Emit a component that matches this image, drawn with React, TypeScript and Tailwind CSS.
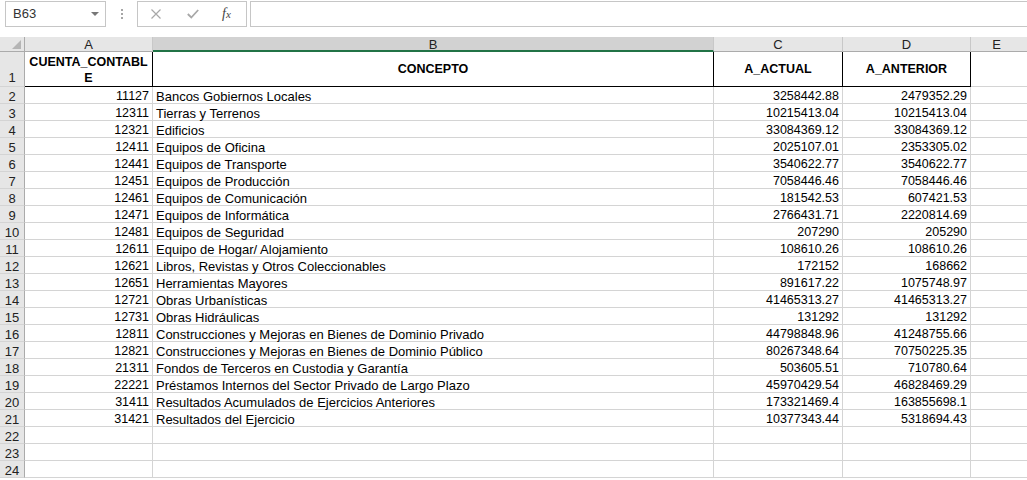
import React from "react";

const rows: [string, string, string, string][] = [
  ["11127", "Bancos Gobiernos Locales", "3258442.88", "2479352.29"],
  ["12311", "Tierras y Terrenos", "10215413.04", "10215413.04"],
  ["12321", "Edificios", "33084369.12", "33084369.12"],
  ["12411", "Equipos de Oficina", "2025107.01", "2353305.02"],
  ["12441", "Equipos de Transporte", "3540622.77", "3540622.77"],
  ["12451", "Equipos de Producción", "7058446.46", "7058446.46"],
  ["12461", "Equipos de Comunicación", "181542.53", "607421.53"],
  ["12471", "Equipos de Informática", "2766431.71", "2220814.69"],
  ["12481", "Equipos de Seguridad", "207290", "205290"],
  ["12611", "Equipo de Hogar/ Alojamiento", "108610.26", "108610.26"],
  ["12621", "Libros, Revistas y Otros Coleccionables", "172152", "168662"],
  ["12651", "Herramientas Mayores", "891617.22", "1075748.97"],
  ["12721", "Obras Urbanísticas", "41465313.27", "41465313.27"],
  ["12731", "Obras Hidráulicas", "131292", "131292"],
  ["12811", "Construcciones y Mejoras en Bienes de Dominio Privado", "44798848.96", "41248755.66"],
  ["12821", "Construcciones y Mejoras en Bienes de Dominio Público", "80267348.64", "70750225.35"],
  ["21311", "Fondos de Terceros en Custodia y Garantía", "503605.51", "710780.64"],
  ["22221", "Préstamos Internos del Sector Privado de Largo Plazo", "45970429.54", "46828469.29"],
  ["31411", "Resultados Acumulados de Ejercicios Anteriores", "173321469.4", "163855698.1"],
  ["31421", "Resultados del Ejercicio", "10377343.44", "5318694.43"],
  ["", "", "", ""],
  ["", "", "", ""],
  ["", "", "", ""],
];

const cell = "h-[17px] border-r border-b border-[#d4d4d4] leading-[19px] whitespace-nowrap";
const rowHead =
  "h-[17px] border-r border-b border-r-[#ababab] border-b-[#d4d4d4] bg-[#e6e6e6] text-center leading-[19px] text-[#222]";

export default function App() {
  return (
    <div className="w-[1027px] h-[480px] overflow-hidden bg-white font-['Liberation_Sans',Arial,sans-serif] text-[13px] text-black">
      {/* toolbar */}
      <div className="flex h-[27px] items-start pt-[1px]">
        <div className="ml-[5px] flex h-[26px] w-[101px] items-center justify-between border border-[#c6c6c6] pl-[7px] pr-[6px] text-[13px] text-[#333]">
          <span>B63</span>
          <svg width="8" height="4" viewBox="0 0 8 4">
            <polygon points="0,0 8,0 4,4" fill="#777" />
          </svg>
        </div>
        <div className="ml-[15px] flex h-[26px] flex-col items-center justify-center gap-[2px]">
          <div className="h-[2px] w-[2px] bg-[#a6a6a6]" />
          <div className="h-[2px] w-[2px] bg-[#a6a6a6]" />
          <div className="h-[2px] w-[2px] bg-[#a6a6a6]" />
        </div>
        <div className="ml-[14px] flex h-[26px] w-[110px] items-center border border-[#c6c6c6]">
          <svg className="ml-[13px]" width="10" height="10" viewBox="0 0 10 10">
            <path d="M0.5 0.5 L9.5 9.5 M9.5 0.5 L0.5 9.5" stroke="#a8a8a8" strokeWidth="1.2" fill="none" />
          </svg>
          <svg className="ml-[26px]" width="12" height="10" viewBox="0 0 12 10">
            <path d="M0.8 5 L4.3 8.5 L11.2 1" stroke="#a8a8a8" strokeWidth="1.8" fill="none" />
          </svg>
          <span className="ml-[23px] font-['Liberation_Serif',serif] italic text-[14px] leading-none text-[#444]">
            f<span className="text-[11px]">x</span>
          </span>
        </div>
        <div className="ml-[3px] h-[26px] flex-1 border-y border-l border-[#c6c6c6]" />
      </div>

      {/* sheet */}
      <div className="mt-[10px] grid grid-cols-[25px_128px_561px_129px_128px_1fr]">
        {/* column headers */}
        <div className="relative h-[15px] border-r border-b border-r-[#ababab] border-b-[#ababab] bg-[#e6e6e6]">
          <svg className="absolute right-[3px] bottom-[2px]" width="9" height="9" viewBox="0 0 9 9">
            <polygon points="9,0 9,9 0,9" fill="#b5b5b5" />
          </svg>
        </div>
        <div className="h-[15px] border-r border-b border-r-[#c8c8c8] border-b-[#ababab] bg-[#e6e6e6] text-center text-[13px] leading-[15px] text-[#222]">A</div>
        <div className="h-[15px] border-r border-b-2 border-r-[#c8c8c8] border-b-[#217346] bg-[#d2d2d2] text-center text-[13px] leading-[15px] text-[#222]">B</div>
        <div className="h-[15px] border-r border-b border-r-[#c8c8c8] border-b-[#ababab] bg-[#e6e6e6] text-center text-[13px] leading-[15px] text-[#222]">C</div>
        <div className="h-[15px] border-r border-b border-r-[#c8c8c8] border-b-[#ababab] bg-[#e6e6e6] text-center text-[13px] leading-[15px] text-[#222]">D</div>
        <div className="h-[15px] border-b border-b-[#ababab] bg-[#e6e6e6] pr-[5px] text-center text-[13px] leading-[15px] text-[#222]">E</div>

        {/* row 1 */}
        <div className="flex h-[35px] items-end justify-center border-r border-b border-r-[#ababab] border-b-[#d4d4d4] bg-[#e6e6e6] leading-[16px] text-[#222]">1</div>
        <div className="flex h-[35px] items-center justify-center border-r border-b border-black pt-[1px] text-center text-[12.5px] font-bold leading-[16px]">
          <span>CUENTA_CONTABL<br />E</span>
        </div>
        <div className="flex h-[35px] items-center justify-center border-r border-b border-black pt-[1px] text-[12.5px] font-bold">CONCEPTO</div>
        <div className="flex h-[35px] items-center justify-center border-r border-b border-black pt-[1px] text-[12.5px] font-bold">A_ACTUAL</div>
        <div className="flex h-[35px] items-center justify-center border-r border-b border-black pt-[1px] text-[12.5px] font-bold">A_ANTERIOR</div>
        <div className="h-[35px] border-b border-[#d4d4d4]" />

        {rows.map((r, i) => (
          <React.Fragment key={i}>
            <div className={rowHead}>{i + 2}</div>
            <div className={`${cell} pr-[3px] text-right text-[12.5px]`}>{r[0]}</div>
            <div className={`${cell} pl-[3px]`}>{r[1]}</div>
            <div className={`${cell} pr-[3px] text-right text-[12.5px]`}>{r[2]}</div>
            <div className={`${cell} pr-[3px] text-right text-[12.5px]`}>{r[3]}</div>
            <div className="h-[17px] border-b border-[#d4d4d4]" />
          </React.Fragment>
        ))}
      </div>
    </div>
  );
}
